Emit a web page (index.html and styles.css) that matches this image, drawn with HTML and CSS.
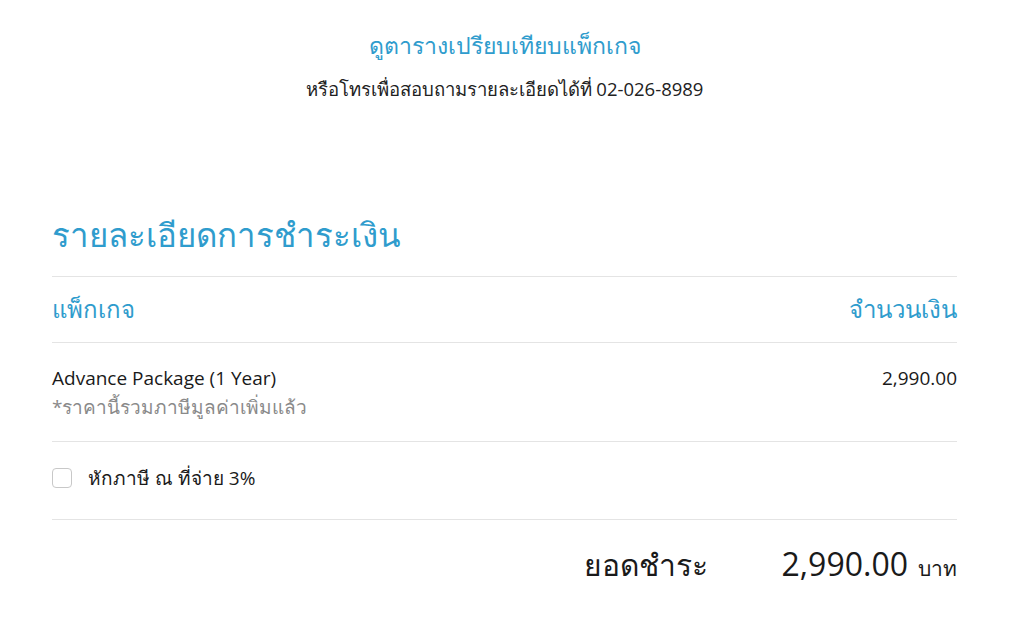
FILE: index.html
```html
<!DOCTYPE html>
<html lang="th">
<head>
<meta charset="utf-8">
<link rel="stylesheet" href="styles.css">
</head>
<body>
<div class="page">
  <div class="compare">
    <a class="compare-link" href="#">ดูตารางเปรียบเทียบแพ็กเกจ</a>
    <p class="phone">หรือโทรเพื่อสอบถามรายละเอียดได้ที่ 02-026-8989</p>
  </div>
  <section class="payment">
    <h2 class="title">รายละเอียดการชำระเงิน</h2>
    <div class="row head">
      <span>แพ็กเกจ</span>
      <span>จำนวนเงิน</span>
    </div>
    <div class="row item">
      <div>
        <div class="item-name">Advance Package (1 Year)</div>
        <div class="item-note">*ราคานี้รวมภาษีมูลค่าเพิ่มแล้ว</div>
      </div>
      <div class="item-price">2,990.00</div>
    </div>
    <div class="row tax">
      <label class="check"><span class="box"></span><span>หักภาษี ณ ที่จ่าย 3%</span></label>
    </div>
    <div class="total">
      <span class="total-label">ยอดชำระ</span>
      <span class="total-amount">2,990.00</span>
      <span class="total-unit">บาท</span>
    </div>
  </section>
</div>
</body>
</html>
```
FILE: styles.css
```css
* { box-sizing: border-box; }
html, body { margin: 0; padding: 0; background: #fff; }
body { font-family: "Open Sans", "Noto Sans", "DejaVu Sans", sans-serif; color: #1a1a1a; }
.page { width: 905px; margin-left: 52px; }
.compare { display: flex; flex-direction: column; align-items: center; padding-top: 29px; }
.compare-link { color: #2f9ccd; text-decoration: none; font-size: 23px; line-height: 32px; }
.phone { margin: 14px 0 0; font-size: 18.5px; line-height: 28px; color: #222; }
.payment { margin-top: 112px; }
.title { margin: 0; font-weight: 400; font-size: 33px; line-height: 40px; color: #2f9ccd; padding-bottom: 21px; border-bottom: 1px solid #e4e4e4; }
.row { display: flex; justify-content: space-between; border-bottom: 1px solid #e4e4e4; }
.head { color: #2f9ccd; font-size: 24px; line-height: 30px; padding: 17px 0 18px; }
.item { padding: 21px 0 19px; font-size: 19px; line-height: 29px; }
.item-note { color: #8a8a8a; font-size: 19px; line-height: 29px; }
.tax { padding: 23px 0 28px; font-size: 19px; line-height: 26px; }
.check { display: flex; align-items: center; gap: 16px; }
.box { width: 20px; height: 20px; border: 1px solid #c8c8c8; border-radius: 4px; background: #fff; }
.total { display: flex; justify-content: flex-end; align-items: baseline; padding-top: 22px; }
.total-label { font-size: 30px; margin-right: 74px; }
.total-amount { font-size: 32px; }
.total-unit { font-size: 21px; margin-left: 10px; }
```
